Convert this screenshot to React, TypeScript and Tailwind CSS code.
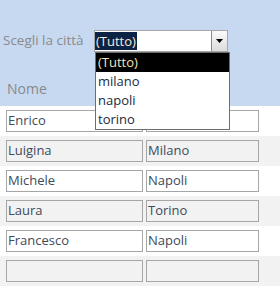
import React from "react";

const rows = [
  { n: "Enrico", c: "", gray: false },
  { n: "Luigina", c: "Milano", gray: true },
  { n: "Michele", c: "Napoli", gray: false },
  { n: "Laura", c: "Torino", gray: true },
  { n: "Francesco", c: "Napoli", gray: false },
  { n: "", c: "", gray: true },
];

export default function App() {
  return (
    <div
      className="relative w-[280px] h-[299px] bg-white overflow-hidden text-[13px]"
      style={{ fontFamily: '"Open Sans", "Noto Sans", sans-serif' }}
    >
      <div className="h-[106px] bg-[#c6d9f1] flex flex-col">
        <div className="h-[30px]" />
        <div className="flex items-center h-[22px]">
          <div className="w-[94px] pl-[3px] text-[#8a8a8a] leading-none text-[13.5px]">Scegli la città</div>
          <div className="w-[134px] h-[22px] bg-white border border-[#a6a6a6] flex items-center">
            <div className="flex-1 h-full flex items-center">
              <span className="bg-[#0c2346] text-[#f4ecd8] h-[18px] leading-[18px] pl-[1px] pr-[1px]">(Tutto)</span>
            </div>
            <div className="w-[16px] h-[20px] bg-gradient-to-b from-[#fafafa] to-[#dcdcdc] border-l border-[#8a8a8a] flex items-center justify-center">
              <svg width="7" height="4" viewBox="0 0 7 4">
                <path d="M0 0 L7 0 L3.5 4 Z" fill="#000" />
              </svg>
            </div>
          </div>
        </div>
        <div className="pl-[7px] mt-[30px] text-[#8a8a8a] leading-none text-[14px]">Nome</div>
      </div>
      {rows.map((r, i) => (
        <div
          key={i}
          className={`h-[30px] pt-[4px] pl-[6px] flex gap-[3px] ${r.gray ? "bg-[#f2f2f2]" : "bg-white"}`}
        >
          <div
            className={`w-[137px] h-[22px] border border-[#a6a6a6] pl-[1px] flex items-center text-[#3d4a5a] ${r.gray ? "bg-[#f2f2f2]" : "bg-white"}`}
          >
            {r.n}
          </div>
          <div
            className={`w-[113px] h-[22px] border border-[#a6a6a6] pl-[1px] flex items-center text-[#3d4a5a] ${r.gray ? "bg-[#f2f2f2]" : "bg-white"}`}
          >
            {r.c}
          </div>
        </div>
      ))}
      <div className="absolute left-[95px] top-[52px] w-[135px] h-[78px] bg-white border border-[#6e6e6e] flex flex-col">
        <div className="h-[19px] bg-black text-[#f3e3b8] pl-[2px] leading-[19px]">(Tutto)</div>
        <div className="h-[19px] text-[#1c2a3c] pl-[2px] leading-[19px]">milano</div>
        <div className="h-[19px] text-[#1c2a3c] pl-[2px] leading-[19px]">napoli</div>
        <div className="h-[19px] text-[#1c2a3c] pl-[2px] leading-[19px]">torino</div>
      </div>
    </div>
  );
}
